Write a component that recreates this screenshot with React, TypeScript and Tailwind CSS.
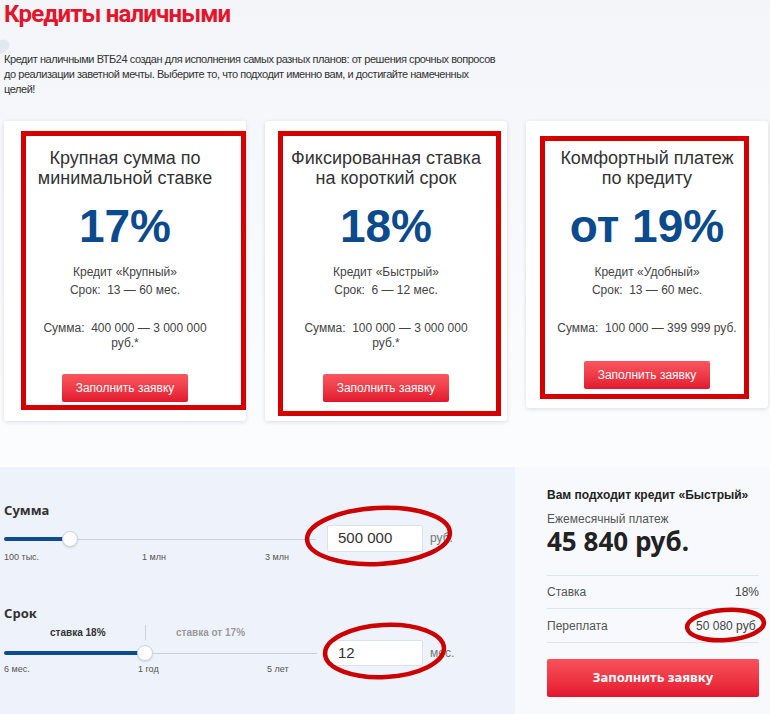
import React from "react";

type CardProps = {
  title: [string, string];
  percent: string;
  name: string;
  term: string;
  sum: string[];
  box: { left: number; top: number; w: number; h: number };
  btnMt: number;
};

function Card({ title, percent, name, term, sum, box, btnMt }: CardProps) {
  return (
    <div className="relative w-[242px] shrink-0 rounded-[3px] bg-white shadow-[0_1px_4px_rgba(0,0,0,0.13)]">
      <div className="flex flex-col items-center pb-[19px] pt-[27px] text-center font-['Liberation_Sans',Arial,sans-serif]">
        <div className="whitespace-nowrap text-[18px] leading-[20px] text-[#333]">
          <div>{title[0]}</div>
          <div>{title[1]}</div>
        </div>
        <div className="mt-[15px] whitespace-nowrap text-[46px] font-bold leading-[46px] text-[#0b4a8c]">
          {percent}
        </div>
        <div className="mt-[14px] whitespace-pre text-[12px] leading-[18px] text-[#444]">
          <div>{name}</div>
          <div>{term}</div>
        </div>
        <div className="mt-[22px] whitespace-pre text-[12px] leading-[15px] text-[#444]">
          {sum.map((s, i) => (
            <div key={i}>{s}</div>
          ))}
        </div>
        <button
          className="h-[28px] w-[126px] rounded-[2px] bg-linear-to-b from-[#fa565f] to-[#e2142e] text-[12px] text-white"
          style={{ marginTop: btnMt }}
        >
          Заполнить заявку
        </button>
      </div>
      <div
        className="pointer-events-none absolute border-[5px] border-[#d50000]"
        style={{ left: box.left, top: box.top, width: box.w, height: box.h }}
      />
    </div>
  );
}

function Track({ fill, width }: { fill: number; width: number }) {
  return (
    <div className="relative h-[16px]" style={{ width }}>
      <div className="absolute left-0 right-0 top-[8px] h-px bg-[#c9d1dc]" />
      <div className="absolute left-0 top-[6px] h-[4px] rounded-full bg-[#0d4c90]" style={{ width: fill }} />
      <div
        className="absolute top-0 h-[16px] w-[16px] rounded-full border border-[#cdd4de] bg-white shadow-[0_1px_2px_rgba(0,0,0,0.12)]"
        style={{ left: fill - 8 }}
      />
    </div>
  );
}

function Ellipse({ left, top, w, h, rot = 0 }: { left: number; top: number; w: number; h: number; rot?: number }) {
  return (
    <svg
      className="pointer-events-none absolute"
      style={{ left, top }}
      width={w}
      height={h}
      viewBox={`0 0 ${w} ${h}`}
    >
      <ellipse
        cx={w / 2}
        cy={h / 2}
        rx={w / 2 - 3}
        ry={h / 2 - 3}
        fill="none"
        stroke="#cc0000"
        strokeWidth={4.5}
        transform={`rotate(${rot} ${w / 2} ${h / 2})`}
      />
    </svg>
  );
}

export default function App() {
  return (
    <div className="relative w-[770px] overflow-hidden bg-linear-to-b from-[#f3f5f9] via-[#fafbfd] to-white font-['Liberation_Sans',Arial,sans-serif]">
      <svg className="absolute left-0 top-[38px]" width="12" height="18" viewBox="0 0 12 18">
        <path d="M0 2 C6 0 11 4 9 9 C7 14 2 16 0 16 Z" fill="#e4e8ee" />
      </svg>
      <div className="px-[4px]">
        <h1 className="pt-px font-['Roboto','Noto_Sans',sans-serif] text-[24px] font-bold leading-[27px] tracking-[-0.85px] text-[#e5142a]">
          Кредиты наличными
        </h1>
        <p className="mt-[24px] w-[497px] text-[11px] leading-[15px] tracking-[-0.45px] text-[#333]">
          Кредит наличными ВТБ24 создан для исполнения самых разных планов: от решения срочных вопросов до реализации
          заветной мечты. Выберите то, что подходит именно вам, и достигайте намеченных целей!
        </p>
      </div>

      <div className="mt-[24px] flex items-start gap-[19px] pl-[4px]">
        <Card
          title={["Крупная сумма по", "минимальной ставке"]}
          percent="17%"
          name="Кредит «Крупный»"
          term="Срок:  13 — 60 мес."
          sum={["Сумма:  400 000 — 3 000 000", "руб.*"]}
          box={{ left: 17, top: 10, w: 225, h: 279 }}
          btnMt={23}
        />
        <Card
          title={["Фиксированная ставка", "на короткий срок"]}
          percent="18%"
          name="Кредит «Быстрый»"
          term="Срок:  6 — 12 мес."
          sum={["Сумма:  100 000 — 3 000 000", "руб.*"]}
          box={{ left: 13, top: 10, w: 223, h: 285 }}
          btnMt={23}
        />
        <Card
          title={["Комфортный платеж", "по кредиту"]}
          percent="от 19%"
          name="Кредит «Удобный»"
          term="Срок:  13 — 60 мес."
          sum={["Сумма:  100 000 — 399 999 руб."]}
          box={{ left: 14, top: 15, w: 209, h: 263 }}
          btnMt={25}
        />
      </div>

      <div className="relative mt-[46px] flex h-[247px]">
        <div className="w-[515px] bg-[#eef2fa] pl-[4px] pt-[35px]">
          <div className="font-['Noto_Sans',sans-serif] text-[13px] font-bold leading-[16px] text-[#333]">Сумма</div>
          <div className="mt-[7px] flex items-start">
            <div className="w-[312px] pt-[6px]">
              <Track fill={66} width={312} />
              <div className="mt-[4px] flex text-[9px] leading-[12px] text-[#555]">
                <span className="w-[138px]">100 тыс.</span>
                <span className="w-[123px]">1 млн</span>
                <span>3 млн</span>
              </div>
            </div>
            <div className="ml-[11px] flex h-[27px] w-[96px] items-center rounded-[2px] border border-[#dce2eb] bg-white px-[10px] text-[15px] text-[#333]">
              500 000
            </div>
            <span className="ml-[7px] mt-[5px] text-[12px] leading-[16px] text-[#777]">руб.</span>
          </div>

          <div className="mt-[42px] font-['Noto_Sans',sans-serif] text-[13px] font-bold leading-[16px] text-[#333]">
            Срок
          </div>
          <div className="mt-[4px] flex items-start">
            <div className="w-[313px]">
              <div className="flex h-[15px] items-center text-[10px] font-bold leading-[12px]">
                <div className="w-[141px] pl-[46px] text-[#333]">ставка 18%</div>
                <div className="h-[15px] w-px bg-[#cdd4de]" />
                <div className="pl-[30px] text-[#9a9a9a]">ставка от 17%</div>
              </div>
              <div className="mt-[5px]">
                <Track fill={141} width={313} />
              </div>
              <div className="mt-[2px] flex text-[9px] leading-[12px] text-[#555]">
                <span className="w-[134px]">6 мес.</span>
                <span className="w-[129px]">1 год</span>
                <span>5 лет</span>
              </div>
            </div>
            <div className="ml-[10px] mt-[15px] flex h-[26px] w-[96px] items-center rounded-[2px] border border-[#dce2eb] bg-white px-[10px] text-[15px] text-[#333]">
              12
            </div>
            <span className="ml-[7px] mt-[20px] text-[12px] leading-[16px] text-[#777]">мес.</span>
          </div>
        </div>

        <div className="flex-1 bg-[#f7f9fd] pl-[32px] pr-[11px] pt-[20px]">
          <div className="whitespace-nowrap text-[12px] font-bold leading-[16px] text-[#222]">
            Вам подходит кредит «Быстрый»
          </div>
          <div className="mt-[8px] text-[12px] leading-[16px] text-[#555]">Ежемесячный платеж</div>
          <div className="font-['Noto_Sans',sans-serif] text-[26px] font-bold leading-[28px] text-[#222]">
            45 840 руб.
          </div>
          <div className="mt-[20px] border-t border-[#dfe5ee] text-[12px] leading-[16px]">
            <div className="flex h-[33px] items-center justify-between border-b border-[#dfe5ee]">
              <span className="text-[#555]">Ставка</span>
              <span className="text-[#444]">18%</span>
            </div>
            <div className="flex h-[34px] items-center justify-between border-b border-[#dfe5ee]">
              <span className="text-[#555]">Переплата</span>
              <span className="text-[#444]">50 080 руб.</span>
            </div>
          </div>
          <button className="mt-[16px] h-[38px] w-full rounded-[2px] bg-linear-to-b from-[#fa505b] to-[#e3122d] font-['Noto_Sans',sans-serif] text-[13px] font-bold text-white">
            Заполнить заявку
          </button>
        </div>

        <Ellipse left={304} top={38} w={149} h={62} rot={-3} />
        <Ellipse left={322} top={155} w={125} h={58} rot={-3} />
        <Ellipse left={684} top={140} w={83} h={36} rot={-4} />
      </div>
    </div>
  );
}
